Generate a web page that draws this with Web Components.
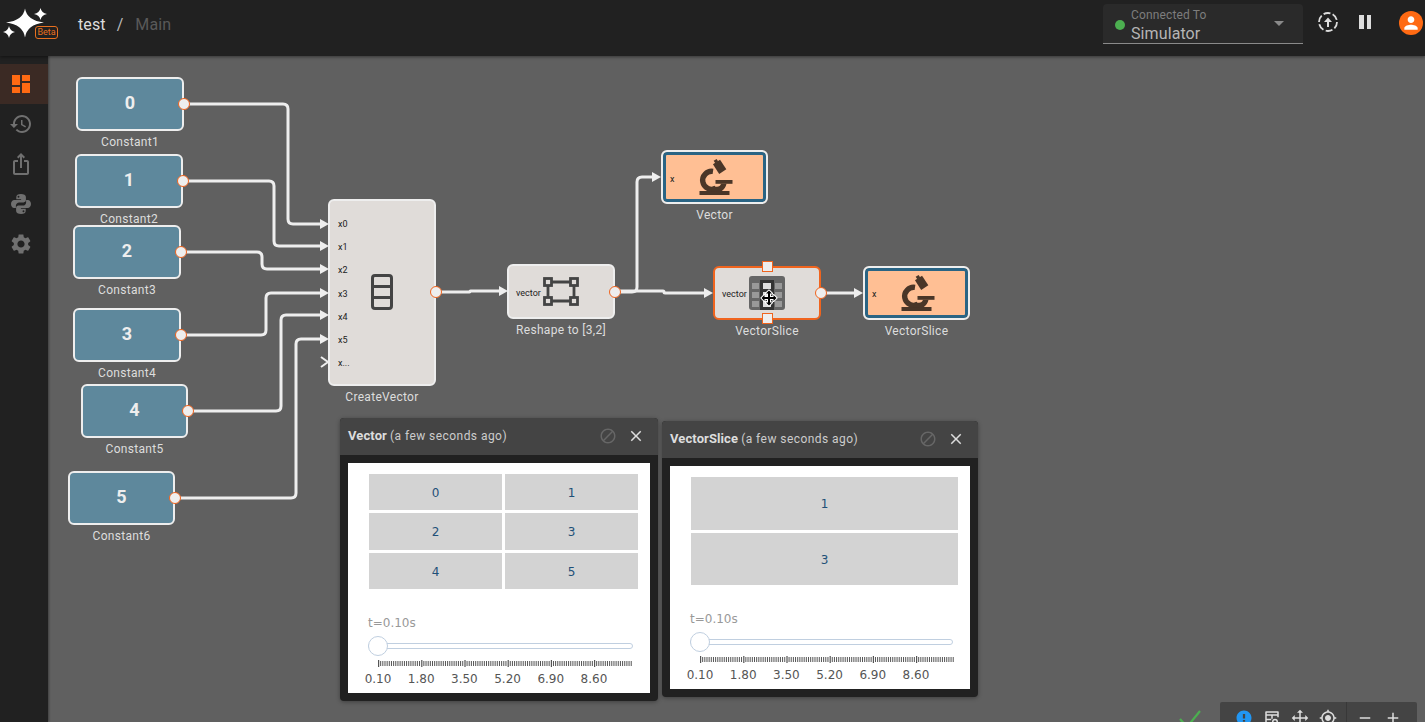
<!DOCTYPE html>
<html>
<head>
<meta charset="utf-8">
<title>test / Main</title>
<style>
    html, body { margin: 0; height: 100%; overflow: hidden; background: #606060; font-family: Roboto, "Liberation Sans", sans-serif; }
    body { display: flex; flex-direction: column; width: 1425px; height: 722px; }
    .row { flex: 1; display: flex; min-height: 0; }
    svg.ico { display: block; overflow: visible; }
</style>
</head>
<body>
<app-header></app-header>
<div class="row">
    <side-bar></side-bar>
    <flow-canvas>
        <wire-layer></wire-layer>

        <flow-node kind="const" x="28" y="21" w="108" h="54" label="Constant1">0</flow-node>
        <flow-node kind="const" x="27" y="98" w="108" h="54" label="Constant2">1</flow-node>
        <flow-node kind="const" x="25" y="169" w="108" h="54" label="Constant3">2</flow-node>
        <flow-node kind="const" x="25" y="252" w="108" h="54" label="Constant4">3</flow-node>
        <flow-node kind="const" x="33" y="328" w="107" h="54" label="Constant5">4</flow-node>
        <flow-node kind="const" x="20" y="415" w="107" h="54" label="Constant6">5</flow-node>

        <flow-node kind="block" x="280" y="143" w="108" h="186.5" label="CreateVector" ports="x0,x1,x2,x3,x4,x5,x...">
            <svg class="ico" width="24" height="38" viewBox="0 0 24 38" fill="none" stroke="#444" stroke-width="3">
                <rect x="2.5" y="2.5" width="19" height="33" rx="2.5"/>
                <path d="M2.5 13.5h19M2.5 24.5h19"/>
            </svg>
        </flow-node>

        <flow-node kind="block" x="459" y="208" w="108" h="55" label="Reshape to [3,2]" ports="vector">
            <svg class="ico" width="36" height="29" viewBox="0 0 36 29" fill="none" stroke="#444" stroke-width="2.8">
                <rect x="1.5" y="1.5" width="7" height="7"/>
                <rect x="27.5" y="1.5" width="7" height="7"/>
                <rect x="1.5" y="20.5" width="7" height="7"/>
                <rect x="27.5" y="20.5" width="7" height="7"/>
                <path d="M8.5 5h19M8.5 24h19M5 8.5v12M31 8.5v12"/>
            </svg>
        </flow-node>

        <flow-node kind="scope" x="613" y="94" w="107" h="54" label="Vector" ports="x"><scope-icon></scope-icon></flow-node>

        <flow-node kind="block" selected x="665" y="209.5" w="108" h="54" label="VectorSlice" ports="vector">
            <svg class="ico" width="36" height="34" viewBox="0 0 36 34">
                <rect width="36" height="34" rx="3" fill="#666"/>
                <rect x="11" y="4" width="14" height="30" fill="#333"/>
                <g fill="#999">
                    <rect x="3" y="7" width="7" height="6"/><rect x="26" y="7" width="7" height="6"/>
                    <rect x="3" y="16" width="7" height="6"/><rect x="26" y="16" width="7" height="6"/>
                    <rect x="3" y="25" width="7" height="6"/><rect x="26" y="25" width="7" height="6"/>
                </g>
                <g fill="#ddd">
                    <rect x="14" y="7" width="8" height="6"/><rect x="14" y="16" width="8" height="6"/><rect x="14" y="25" width="8" height="6"/>
                </g>
                <!-- mouse cursor sitting on the selected block -->
                <path d="M20 14.500l3 3h-2v3.500h3.500v-2l3 3-3 3v-2H21v3.500h2l-3 3-3-3h2V23h-3.500v2l-3-3 3-3v2H19v-3.500h-2z" fill="#000" stroke="#fff" stroke-width="2" paint-order="stroke" stroke-linejoin="round"/>
            </svg>
        </flow-node>

        <flow-node kind="scope" x="815" y="209.5" w="107" h="54" label="VectorSlice" ports="x"><scope-icon></scope-icon></flow-node>

        <scope-window x="292" y="362" w="318" h="283" name="Vector">
            <value-grid cols="2" rows="36px 37px 36px" values="0,1,2,3,4,5"></value-grid>
            <time-slider></time-slider>
        </scope-window>
        <scope-window x="614" y="365" w="316" h="276" name="VectorSlice">
            <value-grid cols="1" rows="53px 52px" values="1,3"></value-grid>
            <time-slider></time-slider>
        </scope-window>

        <status-bar></status-bar>
    </flow-canvas>
</div>

<script>
const ICONS = {
    dashboard: "M3 13h8V3H3v10zm0 8h8v-6H3v6zm10 0h8V11h-8v10zm0-18v6h8V3h-8z",
    history: "M13 3c-4.970 0-9 4.030-9 9H1l3.890 3.890.07.14L9 12H6c0-3.870 3.130-7 7-7s7 3.130 7 7-3.130 7-7 7c-1.930 0-3.680-.79-4.940-2.060l-1.420 1.420C8.270 19.990 10.510 21 13 21c4.970 0 9-4.030 9-9s-4.030-9-9-9zm-1 5v5l4.280 2.540.72-1.210-3.500-2.080V8H12z",
    share: "M16 5l-1.420 1.420-1.590-1.590V16h-1.980V4.830L9.420 6.420 8 5l4-4 4 4zm4 5v11c0 1.100-.9 2-2 2H6c-1.110 0-2-.9-2-2V10c0-1.110.89-2 2-2h3v2H6v11h12V10h-3V8h3c1.100 0 2 .89 2 2z",
    python: "M11.900 2C9 2 7.300 3.100 7.300 5v2.300h4.800v.8H5.300C3.400 8.100 2 9.900 2 12.100s1.300 4 3.100 4h1.800v-2.500c0-1.800 1.500-3.200 3.300-3.200h4.400c1.300 0 2.300-1 2.300-2.300V5c0-1.900-2.100-3-5-3zM9.500 3.800a.95.95 0 1 1 0 1.900.95.95 0 0 1 0-1.900z M12.100 22c2.900 0 4.600-1.100 4.600-3v-2.300h-4.800v-.8h6.800c1.900 0 3.300-1.800 3.300-4s-1.300-4-3.100-4h-1.800v2.500c0 1.800-1.500 3.200-3.300 3.200H9.400c-1.300 0-2.300 1-2.300 2.300V19c0 1.900 2.100 3 5 3zm2.400-1.800a.95.95 0 1 1 0-1.900.95.95 0 0 1 0 1.900z",
    settings: "M19.140 12.940c.04-.3.06-.61.06-.94 0-.32-.02-.64-.07-.94l2.030-1.580c.18-.14.23-.41.12-.61l-1.920-3.320c-.12-.22-.37-.29-.59-.22l-2.390.96c-.5-.38-1.030-.7-1.620-.94l-.36-2.540c-.04-.24-.24-.41-.48-.41h-3.840c-.24 0-.43.17-.47.41l-.36 2.540c-.59.24-1.130.57-1.620.94l-2.390-.96c-.22-.08-.47 0-.59.22L2.740 8.870c-.12.21-.08.47.12.61l2.030 1.580c-.05.3-.09.63-.09.94s.02.64.07.94l-2.030 1.580c-.18.14-.23.41-.12.61l1.920 3.320c.12.22.37.29.59.22l2.390-.96c.5.38 1.030.7 1.620.94l.36 2.540c.05.24.24.41.48.41h3.840c.24 0 .44-.17.47-.41l.36-2.540c.59-.24 1.130-.56 1.620-.94l2.390.96c.22.08.47 0 .59-.22l1.920-3.320c.12-.22.07-.47-.12-.61l-2.010-1.580zM12 15.600c-1.980 0-3.600-1.620-3.600-3.600s1.620-3.600 3.600-3.600 3.600 1.620 3.600 3.600-1.620 3.600-3.600 3.600z",
    person: "M12 12c2.210 0 4-1.790 4-4s-1.790-4-4-4-4 1.790-4 4 1.790 4 4 4zm0 2c-2.670 0-8 1.340-8 4v2h16v-2c0-2.660-5.330-4-8-4z",
    block: "M12 2C6.480 2 2 6.480 2 12s4.480 10 10 10 10-4.480 10-10S17.520 2 12 2zM4 12c0-4.420 3.580-8 8-8 1.850 0 3.550.63 4.900 1.690L5.690 16.900C4.630 15.550 4 13.850 4 12zm8 8c-1.850 0-3.550-.63-4.900-1.690L18.310 7.100C19.370 8.450 20 10.150 20 12c0 4.420-3.580 8-8 8z",
    close: "M19 6.410L17.590 5 12 10.590 6.410 5 5 6.410 10.590 12 5 17.590 6.410 19 12 13.410 17.590 19 19 17.590 13.410 12z",
    info: "M12 2C6.480 2 2 6.480 2 12s4.480 10 10 10 10-4.480 10-10S17.520 2 12 2zm1.500 15h-3v-2.500h3V17zm0-4.500h-3V6.500h3v6z",
    table: "M4 3h16a1 1 0 0 1 1 1v7h-2V9h-6v4h-2V9H5v4h6v2H5v4h6v2H4a1 1 0 0 1-1-1V4a1 1 0 0 1 1-1zm1 2v2h14V5H5zm11 8a4 4 0 1 1 0 8 4 4 0 0 1 0-8zm0 2a2 2 0 1 0 0 4 2 2 0 0 0 0-4z",
    move: "M12 1l4 4h-3v6h6V8l4 4-4 4v-3h-6v6h3l-4 4-4-4h3v-6H5v3l-4-4 4-4v3h6V5H8z",
    target: "M12 8c-2.210 0-4 1.790-4 4s1.790 4 4 4 4-1.790 4-4-1.790-4-4-4zm8.940 3c-.46-4.170-3.770-7.480-7.940-7.940V1h-2v2.060C6.830 3.520 3.520 6.830 3.060 11H1v2h2.060c.46 4.170 3.770 7.480 7.940 7.940V23h2v-2.060c4.170-.46 7.480-3.770 7.940-7.940H23v-2h-2.060zM12 19c-3.870 0-7-3.130-7-7s3.130-7 7-7 7 3.130 7 7-3.130 7-7 7z",
    minus: "M19 13H5v-2h14v2z",
    plus: "M19 13h-6v6h-2v-6H5v-2h6V5h2v6h6v2z"
};

const iconSvg = (name, size, color) =>
    `<svg width="${size}" height="${size}" viewBox="0 0 24 24" fill="${color}" style="display:block"><path d="${ICONS[name]}"/></svg>`;

class AppHeader extends HTMLElement {
    connectedCallback() {
        this.attachShadow({mode: "open"}).innerHTML = `
            <style>
                :host {
                    display: flex;
                    align-items: center;
                    box-sizing: border-box;
                    height: 56px;
                    padding: 0 2px 12px 0;
                    background: #212121;
                    box-shadow: 0 1px 3px rgba(0, 0, 0, .45);
                    position: relative;
                    z-index: 3;
                    color: #ddd;
                }
                .logo { position: relative; width: 78px; height: 44px; flex: none; }
                .logo svg { display: block; }
                .beta {
                    position: absolute;
                    left: 35px;
                    top: 26px;
                    box-sizing: border-box;
                    width: 23px;
                    height: 13px;
                    border: 1px solid #e8701f;
                    border-radius: 3px;
                    background: #212121;
                    color: #e8701f;
                    font-size: 9px;
                    line-height: 11px;
                    text-align: center;
                }
                .crumbs { font-size: 16px; display: flex; margin-top: 4px; letter-spacing: .1px; }
                .crumbs .sep { margin: 0 12px 0 11px; color: #bbb; }
                .crumbs .cur { color: #595959; }
                .spacer { flex: 1; }
                .select {
                    box-sizing: border-box;
                    width: 200px;
                    height: 40px;
                    background: #2a2a2a;
                    border-bottom: 1px solid #8a8a8a;
                    border-radius: 4px 4px 0 0;
                    display: flex;
                    align-items: center;
                    padding: 0 19px 0 12px;
                    margin-top: 4px;
                }
                .dot { width: 10px; height: 10px; border-radius: 50%; background: #4caf50; margin-right: 6px; margin-top: 2px; }
                .txt { flex: 1; display: flex; flex-direction: column; padding-top: 5px; }
                .txt small { font-size: 12px; line-height: 14px; color: #7d7d7d; letter-spacing: .15px; }
                .txt span { font-size: 16px; line-height: 20px; color: #b5b5b5; letter-spacing: .1px; margin-top: 2px; }
                .caret { width: 0; height: 0; border: 5px solid transparent; border-top-color: #8a8a8a; border-bottom: 0; }
                .sync { margin-left: 15px; }
                .pause { margin-left: 21px; display: flex; gap: 3px; }
                .pause i { width: 4.500px; height: 14px; background: #ddd; display: block; }
                .avatar {
                    margin-left: 28px;
                    margin-top: 2px;
                    width: 24px;
                    height: 24px;
                    border-radius: 50%;
                    background: #ff6a13;
                    display: flex;
                    align-items: center;
                    justify-content: center;
                }
            </style>
            <div class="logo">
                <svg width="60" height="44" viewBox="0 0 60 44" fill="#fff">
                    <path d="M25 8.500Q27 20.500 44 22.500Q27 24.500 25 37.500Q23 24.500 6 22.500Q23 20.500 25 8.500z"/>
                    <path d="M40.500 8Q41.500 13 47 14Q41.500 15 40.500 20Q39.500 15 34 14Q39.500 13 40.500 8z"/>
                    <path d="M9 26Q10 31 15 32Q10 33 9 38Q8 33 3 32Q8 31 9 26z"/>
                </svg>
                <div class="beta">Beta</div>
            </div>
            <div class="crumbs"><span>test</span><span class="sep">/</span><span class="cur">Main</span></div>
            <div class="spacer"></div>
            <div class="select">
                <div class="dot"></div>
                <div class="txt"><small>Connected To</small><span>Simulator</span></div>
                <div class="caret"></div>
            </div>
            <svg class="sync" width="20" height="20" viewBox="0 0 20 20" fill="none" stroke="#ddd">
                <circle cx="10" cy="10" r="9" stroke-width="1.800" stroke-dasharray="7 2.400"/>
                <path d="M10 15V7" stroke-width="2"/>
                <path d="M6 10l4-4.500 4 4.500z" fill="#ddd" stroke="none"/>
            </svg>
            <div class="pause"><i></i><i></i></div>
            <div class="avatar">${iconSvg("person", 20, "#fff")}</div>
        `;
    }
}

class SideBar extends HTMLElement {
    connectedCallback() {
        const items = ["dashboard", "history", "share", "python", "settings"].map((name, i) =>
            `<div class="item ${i === 0 ? "on" : ""}">${iconSvg(name, 24, i === 0 ? "#ff6a13" : "#707070")}</div>`).join("");
        this.attachShadow({mode: "open"}).innerHTML = `
            <style>
                :host {
                    display: block;
                    flex: none;
                    width: 48px;
                    box-sizing: border-box;
                    padding-top: 8px;
                    background: #212121;
                    box-shadow: 1px 0 2px rgba(0, 0, 0, .35);
                    position: relative;
                    z-index: 2;
                }
                .item { height: 40px; display: flex; align-items: center; justify-content: center; padding-right: 6px; }
                .on { background: #3b2a24; }
            </style>
            ${items}
        `;
    }
}

class FlowCanvas extends HTMLElement {
    connectedCallback() {
        this.attachShadow({mode: "open"}).innerHTML = `
            <style>
                :host { display: block; flex: 1; position: relative; background: #606060; overflow: hidden; }
            </style>
            <slot></slot>
        `;
    }
}

class WireLayer extends HTMLElement {
    // wire coordinates are page coordinates, the viewBox starts where the canvas starts
    connectedCallback() {
        const wires = [
            [[184, 104], [288, 104], [288, 224], [321, 224]],
            [[183, 181], [274, 181], [274, 246], [321, 246]],
            [[181, 252], [262, 252], [262, 269], [321, 269]],
            [[181, 335], [266, 335], [266, 293], [321, 293]],
            [[188, 411], [281, 411], [281, 315], [321, 315]],
            [[175, 498], [296, 498], [296, 339], [321, 339]],
            [[436, 292], [470, 292], [470, 291], [500, 291]],
            [[615, 292], [637, 292], [637, 177], [653, 177]],
            [[615, 291], [664, 291], [664, 293], [705, 293]],
            [[821, 293], [855, 293]]
        ];
        const arrows = [[329, 224], [329, 246], [329, 269], [329, 293], [329, 315], [329, 339], [508, 291], [661, 177], [713, 293], [863, 293]];
        const toPath = pts => {
            let d = `M${pts[0][0]} ${pts[0][1]}`;
            for (let i = 1; i < pts.length - 1; i++) {
                const [x, y] = pts[i];
                const [px, py] = pts[i - 1];
                const [nx, ny] = pts[i + 1];
                const r = Math.min(5, Math.abs(x - px) / 2 + Math.abs(y - py) / 2, Math.abs(nx - x) / 2 + Math.abs(ny - y) / 2);
                d += `L${x - Math.sign(x - px) * r} ${y - Math.sign(y - py) * r}Q${x} ${y} ${x + Math.sign(nx - x) * r} ${y + Math.sign(ny - y) * r}`;
            }
            const last = pts[pts.length - 1];
            return d + `L${last[0]} ${last[1]}`;
        };
        this.attachShadow({mode: "open"}).innerHTML = `
            <style>
                :host { position: absolute; left: 0; top: 0; width: 1377px; height: 666px; }
                svg { display: block; }
            </style>
            <svg width="1377" height="666" viewBox="48 56 1377 666">
                ${wires.map(w => `<path d="${toPath(w)}" fill="none" stroke="#eee" stroke-width="3"/>`).join("")}
                ${arrows.map(([x, y]) => `<path d="M${x} ${y}l-9 -5v10z" fill="#eee"/>`).join("")}
                <path d="M321 357l7 5-7 5" fill="none" stroke="#eee" stroke-width="2"/>
            </svg>
        `;
    }
}

class FlowNode extends HTMLElement {
    connectedCallback() {
        const kind = this.getAttribute("kind");
        const selected = this.hasAttribute("selected");
        const ports = (this.getAttribute("ports") || "").split(",").filter(Boolean);
        this.attachShadow({mode: "open"}).innerHTML = `
            <style>
                :host {
                    position: absolute;
                    left: ${this.getAttribute("x")}px;
                    top: ${this.getAttribute("y")}px;
                    width: ${this.getAttribute("w")}px;
                    display: flex;
                    flex-direction: column;
                }
                .box {
                    position: relative;
                    box-sizing: border-box;
                    height: ${this.getAttribute("h")}px;
                    border: 2px solid #eee;
                    border-radius: 6px;
                    display: grid;
                    align-items: center;
                    justify-items: center;
                }
                .const { background: #5e889c; color: #eee; font-size: 18px; font-weight: 700; padding-bottom: 3px; }
                .block { background: #e0dcd9; }
                .scope { background: #ffbf94; box-shadow: inset 0 0 0 3px #2a6484; }
                .sel { border-color: #f0641e; }
                .ports, .icon { grid-area: 1 / 1; }
                .ports {
                    justify-self: start;
                    padding: ${ports.length > 1 ? 4 : 3}px 0 0 ${ports.length > 1 ? 8 : 7}px;
                    font-size: 9px;
                    color: #222;
                    line-height: ${ports.length > 1 ? 23.2 : 12}px;
                }
                .icon { display: flex; align-items: center; justify-content: center; }
                .dot {
                    position: absolute;
                    right: -8px;
                    top: 50%;
                    width: 12px;
                    height: 12px;
                    margin-top: -6px;
                    box-sizing: border-box;
                    border-radius: 50%;
                    background: #eee;
                    border: 1.500px solid #f0641e;
                }
                .handle {
                    position: absolute;
                    left: 50%;
                    margin-left: -5.500px;
                    box-sizing: border-box;
                    width: 11px;
                    height: 11px;
                    background: #eee;
                    border: 1px solid #f0641e;
                }
                .label {
                    margin-top: 4px;
                    font-size: 12px;
                    line-height: 14px;
                    letter-spacing: .3px;
                    color: #ddd;
                    text-align: center;
                    white-space: nowrap;
                }
            </style>
            <div class="box ${kind} ${selected ? "sel" : ""}">
                <div class="ports">${ports.map(p => `<div>${p}</div>`).join("")}</div>
                <div class="icon"><slot></slot></div>
                ${kind === "scope" ? "" : `<div class="dot"></div>`}
                ${selected ? `<div class="handle" style="top:-7px"></div><div class="handle" style="bottom:-6.500px"></div>` : ""}
            </div>
            <div class="label">${this.getAttribute("label")}</div>
        `;
    }
}

class ScopeIcon extends HTMLElement {
    connectedCallback() {
        this.attachShadow({mode: "open"}).innerHTML = `
            <style>:host { display: block; width: 36px; height: 38px; }</style>
            <svg width="36" height="38" viewBox="0 0 36 38" style="display:block" fill="#4a3628">
                <rect x="2.500" y="33" width="30" height="4"/>
                <rect x="18.500" y="22" width="17" height="3.800"/>
                <path d="M16 13.400A9 9 0 1 0 19 30.200" fill="none" stroke="#4a3628" stroke-width="5.400"/>
                <path d="M24 25.700h5.500c-.5 3-2.500 5.800-5 7.600H14l2-4.500h4c2 0 3.500-1.300 4-3.100z"/>
                <rect x="18.500" y="3" width="8.500" height="11.500" transform="rotate(-33 22.800 9)"/>
                <rect x="21" y="0.500" width="3.500" height="3" transform="rotate(-33 22.800 9)"/>
            </svg>
        `;
    }
}

class ScopeWindow extends HTMLElement {
    connectedCallback() {
        this.attachShadow({mode: "open"}).innerHTML = `
            <style>
                :host {
                    position: absolute;
                    left: ${this.getAttribute("x")}px;
                    top: ${this.getAttribute("y")}px;
                    width: ${this.getAttribute("w")}px;
                    height: ${this.getAttribute("h")}px;
                    display: flex;
                    flex-direction: column;
                    background: #212121;
                    border-radius: 4px;
                    box-shadow: 0 1px 4px rgba(0, 0, 0, .35);
                    overflow: hidden;
                }
                .head {
                    flex: none;
                    box-sizing: border-box;
                    height: 37px;
                    padding: 0 13px 2px 8px;
                    background: #444;
                    display: flex;
                    align-items: center;
                    font-size: 12px;
                    color: #ccc;
                    letter-spacing: .45px;
                }
                .head b { font-size: 13px; color: #ddd; letter-spacing: .1px; margin-right: 3px; }
                .grow { flex: 1; }
                .ban { margin-right: 10px; }
                .body {
                    flex: 1;
                    margin: 8px;
                    background: #fff;
                    display: flex;
                    flex-direction: column;
                    justify-content: space-between;
                }
            </style>
            <div class="head">
                <b>${this.getAttribute("name")}</b><span>(a few seconds ago)</span>
                <div class="grow"></div>
                <div class="ban">${iconSvg("block", 18, "#666")}</div>
                <div>${iconSvg("close", 18, "#ddd")}</div>
            </div>
            <div class="body"><slot></slot></div>
        `;
    }
}

class ValueGrid extends HTMLElement {
    connectedCallback() {
        const values = this.getAttribute("values").split(",");
        this.attachShadow({mode: "open"}).innerHTML = `
            <style>
                :host {
                    display: grid;
                    grid-template-columns: repeat(${this.getAttribute("cols")}, 1fr);
                    grid-template-rows: ${this.getAttribute("rows")};
                    gap: 3px;
                    margin: 11px 12px 0 21px;
                }
                div {
                    background: #d3d3d3;
                    color: #1f5078;
                    font: 12px "DejaVu Sans", Verdana, sans-serif;
                    display: flex;
                    align-items: center;
                    justify-content: center;
                    padding-top: 1px;
                }
            </style>
            ${values.map(v => `<div>${v}</div>`).join("")}
        `;
    }
}

class TimeSlider extends HTMLElement {
    connectedCallback() {
        let ticks = "";
        for (let i = 0; i <= 117; i++) {
            const x = i * 2.16;
            const major = i % 20 === 0;
            ticks += `<rect x="${x.toFixed(2)}" y="${major ? 0 : 1}" width="${major ? 1.2 : 1}" height="${major ? 7 : 5}" fill="#555"/>`;
        }
        const labels = ["0.10", "1.80", "3.50", "5.20", "6.90", "8.60"];
        this.attachShadow({mode: "open"}).innerHTML = `
            <style>
                :host {
                    display: block;
                    padding: 0 17px 7px 20px;
                    font: 12px "DejaVu Sans", Verdana, sans-serif;
                }
                .t { color: #999; line-height: 16px; margin-top: 1px; }
                .rail { position: relative; height: 20px; margin-top: 5px; display: flex; align-items: center; }
                .track {
                    flex: 1;
                    box-sizing: border-box;
                    height: 6px;
                    border: 1px solid #c0cfe0;
                    border-radius: 3px;
                    background: #fff;
                }
                .handle {
                    position: absolute;
                    left: 0;
                    top: 0;
                    box-sizing: border-box;
                    width: 20px;
                    height: 20px;
                    border-radius: 50%;
                    border: 1px solid #c0cfe0;
                    background: #fff;
                }
                svg { display: block; margin: 4px 0 0 10px; }
                .labels { display: flex; margin: 5px 0 0 -11.600px; color: #555; line-height: 14px; }
                .labels span { width: 43.200px; text-align: center; flex: none; }
            </style>
            <div class="t">t=0.10s</div>
            <div class="rail"><div class="track"></div><div class="handle"></div></div>
            <svg width="254" height="7" viewBox="0 0 254 7">${ticks}</svg>
            <div class="labels">${labels.map(l => `<span>${l}</span>`).join("")}</div>
        `;
    }
}

class StatusBar extends HTMLElement {
    connectedCallback() {
        const cell = (n, c) => `<div class="cell">${iconSvg(n, 18, c)}</div>`;
        this.attachShadow({mode: "open"}).innerHTML = `
            <style>
                :host {
                    position: absolute;
                    left: 1130px;
                    top: 646px;
                    display: flex;
                    align-items: flex-start;
                }
                .check { margin-top: 7px; width: 42px; }
                .tools {
                    display: flex;
                    box-sizing: border-box;
                    width: 197px;
                    height: 40px;
                    padding-left: 10px;
                    background: #444;
                    border-radius: 2px 2px 0 0;
                }
                .cell { width: 28px; padding-top: 7px; display: flex; justify-content: center; }
                .div { width: 1px; height: 40px; background: #383838; margin: 0 4px 0 4px; }
            </style>
            <svg class="check" width="42" height="24" viewBox="0 0 42 24" fill="none" stroke="#4caf50" stroke-width="2.200" style="display:block">
                <path d="M2 10l7 8L22 2"/>
            </svg>
            <div class="tools">
                ${cell("info", "#2196f3")}${cell("table", "#ddd")}${cell("move", "#ddd")}${cell("target", "#ddd")}
                <div class="div"></div>
                ${cell("minus", "#ddd")}${cell("plus", "#ddd")}
            </div>
        `;
    }
}

customElements.define("app-header", AppHeader);
customElements.define("side-bar", SideBar);
customElements.define("flow-canvas", FlowCanvas);
customElements.define("wire-layer", WireLayer);
customElements.define("flow-node", FlowNode);
customElements.define("scope-icon", ScopeIcon);
customElements.define("scope-window", ScopeWindow);
customElements.define("value-grid", ValueGrid);
customElements.define("time-slider", TimeSlider);
customElements.define("status-bar", StatusBar);
</script>
</body>
</html>
